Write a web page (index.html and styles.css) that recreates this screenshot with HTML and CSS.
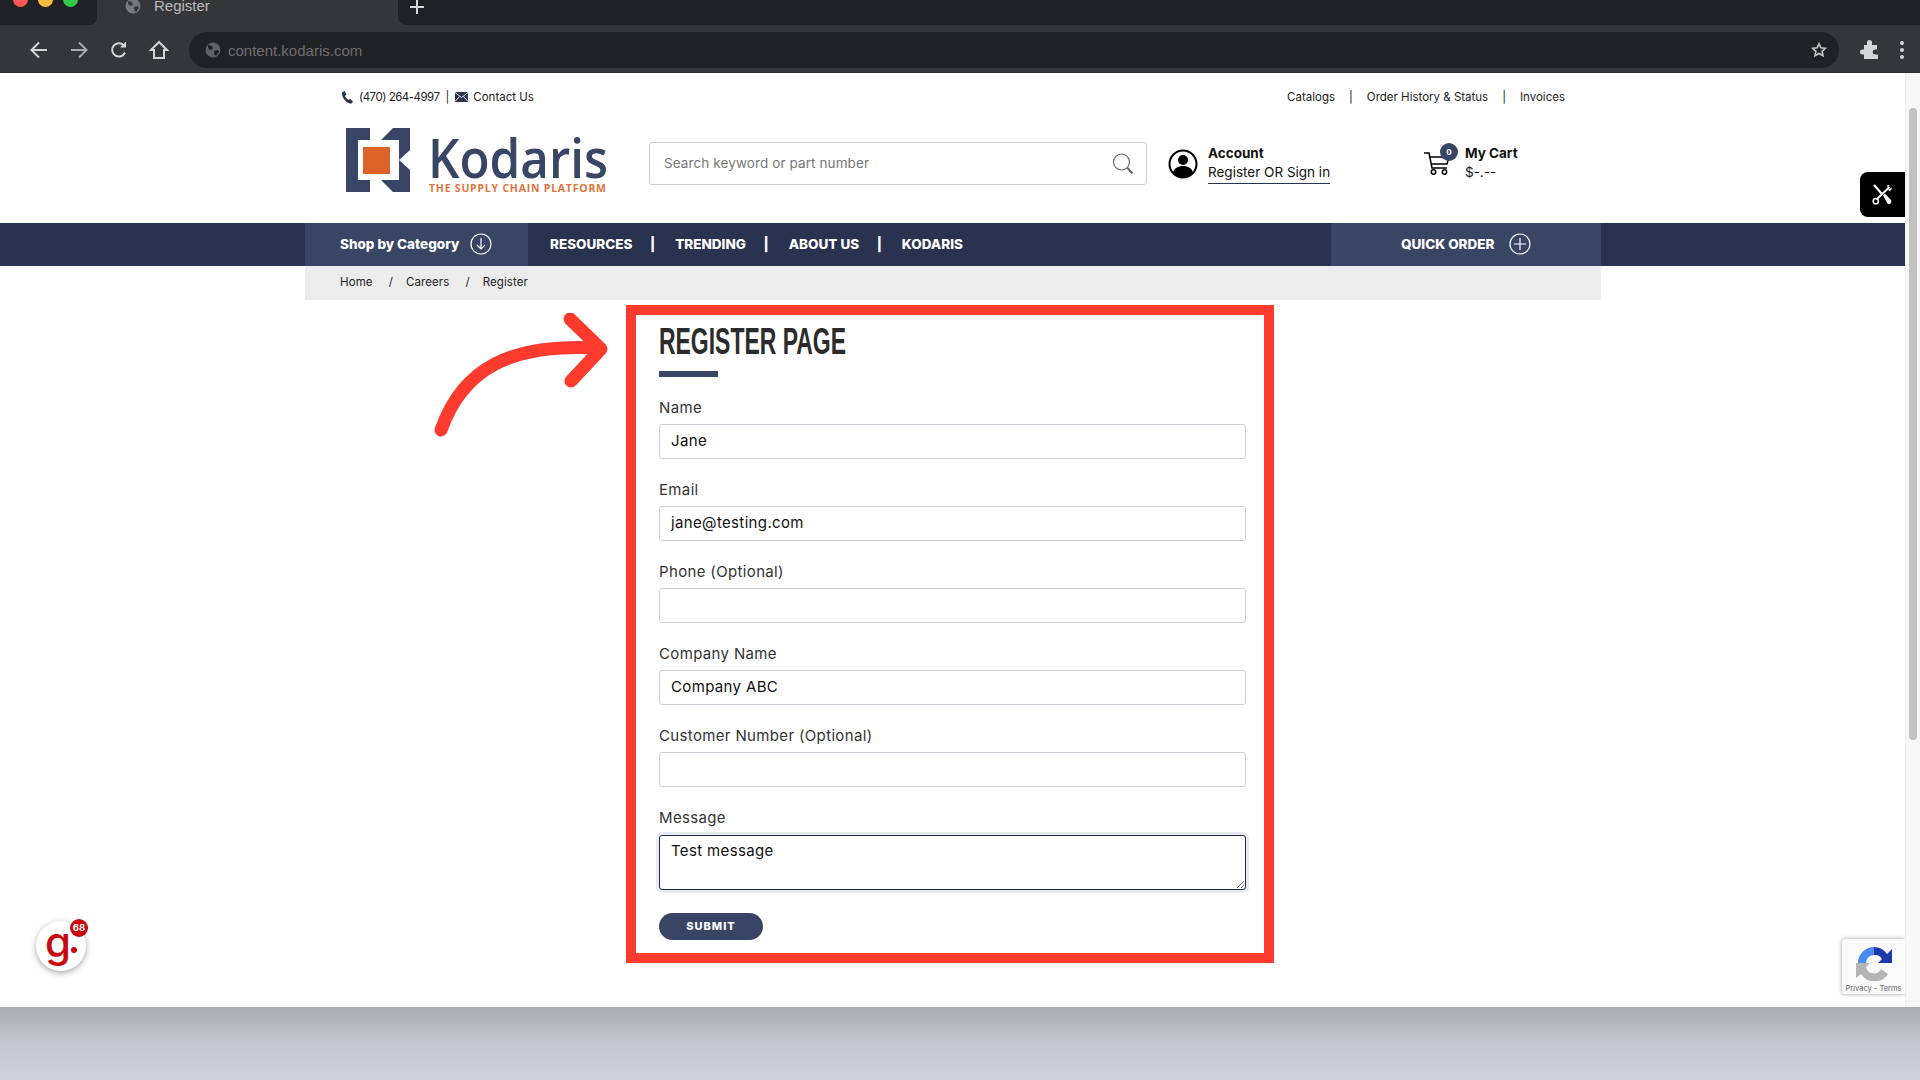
FILE: index.html
```html
<!DOCTYPE html>
<html lang="en">

<head>
  <meta charset="UTF-8" />
  <title>Register</title>
  <link rel="stylesheet" href="styles.css">
</head>

<body>
  <!-- Browser frame -->
  <div class="tabstrip">
    <div class="tabstrip-left">
      <span class="light light-red"></span>
      <span class="light light-yellow"></span>
      <span class="light light-green"></span>
    </div>
    <div class="tab">
      <svg class="globe" width="16" height="16" viewBox="0 0 16 16"><circle cx="8" cy="8" r="7.500" fill="#77797d"/><path d="M3 3l4 1 1 3-3 1-2-2zM9 9l4-1 1 2-3 4-2-2z" fill="#35363a"/></svg>
      <span class="tab-title">Register</span>
    </div>
    <div class="tabstrip-right">
      <svg width="14" height="14" viewBox="0 0 14 14"><path d="M7 0v14M0 7h14" stroke="#d5d6d8" stroke-width="2"/></svg>
    </div>
  </div>
  <div class="toolbar">
    <svg class="tool-icon" width="20" height="20" viewBox="0 0 20 20"><path d="M18 10H3M10 2.500L2.500 10l7.500 7.500" fill="none" stroke="#d5d6d8" stroke-width="2"/></svg>
    <svg class="tool-icon" width="20" height="20" viewBox="0 0 20 20"><path d="M2 10h15M10 2.500l7.500 7.500-7.500 7.500" fill="none" stroke="#a9aaad" stroke-width="2"/></svg>
    <svg class="tool-icon" width="20" height="20" viewBox="0 0 20 20"><path d="M16 12.500A6.700 6.700 0 1 1 14.500 5" fill="none" stroke="#d5d6d8" stroke-width="2"/><path d="M11 7.500h6v-6z" fill="#d5d6d8"/></svg>
    <svg class="tool-icon" width="20" height="20" viewBox="0 0 20 20"><path d="M10 2L2 10h3v8h10v-8h3z" fill="none" stroke="#d5d6d8" stroke-width="2"/></svg>
    <div class="omnibox">
      <svg width="16" height="16" viewBox="0 0 16 16"><circle cx="8" cy="8" r="7.500" fill="#5f6165"/><path d="M3 3l4 1 1 3-3 1-2-2zM9 9l4-1 1 2-3 4-2-2z" fill="#202124"/></svg>
      <span class="omnibox-url">content.kodaris.com</span>
      <svg class="star" width="16" height="16" viewBox="0 0 16 16"><path d="M8 1.800l1.900 4 4.400.5-3.200 3 .9 4.400L8 11.500l-4 2.200.9-4.400-3.200-3 4.400-.5z" fill="none" stroke="#c8c9cb" stroke-width="1.600"/></svg>
    </div>
    <svg class="puzzle" width="20" height="20" viewBox="0 0 20 20"><path d="M7 2.500a2.500 2.500 0 0 1 5 0V5h5v4.500h-1.800a2.500 2.500 0 0 0 0 5H18V19H4v-4.500H2.500a2.500 2.500 0 0 1 0-5H4V5h3z" fill="#d5d6d8"/></svg>
    <span class="menu-dots"><i></i><i></i><i></i></span>
  </div>

  <div class="viewport">
    <div class="site">
      <div class="container topbar">
        <div class="topbar-left">
          <svg class="top-icon" width="13" height="13" viewBox="0 0 13 13"><path d="M1 1.500L3.500 0l2 3.500L4 5c.5 1.500 2 3.200 3.500 4l1.500-1.200 3 2.700-1.500 2C6 13 .5 7 1 1.500z" fill="#29324f"/></svg>
          <a class="phone">(470) 264-4997</a>
          <span class="pipe">|</span>
          <svg class="top-icon" width="13" height="10" viewBox="0 0 13 10"><rect width="13" height="10" fill="#29324f"/><path d="M0 .5l6.500 5 6.500-5M0 9.500l4.500-5M13 9.500l-4.500-5" fill="none" stroke="#fff" stroke-width=".9"/></svg>
          <a>Contact Us</a>
        </div>
        <div class="topbar-right">
          <a>Catalogs</a><span class="pipe">|</span><a>Order History &amp; Status</a><span class="pipe">|</span><a>Invoices</a>
        </div>
      </div>

      <div class="container masthead">
        <svg class="logo" width="270" height="70" viewBox="0 0 270 70">
          <g fill="#384565">
            <path d="M2 3H26V15H14V55H26V67H2z"/>
            <path d="M37 15L49 3H66V25L55 35L66 45V67H49L37 55H55V15z"/>
          </g>
          <rect x="19" y="22" width="27" height="27" fill="#dd6428"/>
          <text class="logo-name" x="84" y="53" textLength="180" lengthAdjust="spacingAndGlyphs">Kodaris</text>
          <text class="logo-tag" x="85" y="67" textLength="177">THE SUPPLY CHAIN PLATFORM</text>
        </svg>

        <div class="search">
          <input class="search-input" type="text" placeholder="Search keyword or part number">
          <svg width="24" height="24" viewBox="0 0 24 24"><circle cx="10.500" cy="10" r="8" fill="none" stroke="#666" stroke-width="1.200"/><path d="M16.500 16l5 5.500" stroke="#666" stroke-width="2"/></svg>
        </div>

        <div class="account">
          <svg width="30" height="30" viewBox="0 0 30 30"><circle cx="15" cy="15" r="13.500" fill="#fff" stroke="#000" stroke-width="2"/><circle cx="15" cy="11" r="5" fill="#000"/><path d="M5 24c1-5 5-7 10-7s9 2 10 7c-3 3-6 5-10 5s-7-2-10-5z" fill="#000"/></svg>
          <div class="account-text">
            <strong>Account</strong>
            <a>Register OR Sign in</a>
          </div>
        </div>

        <div class="cart">
          <div class="cart-icon">
            <svg width="28" height="28" viewBox="0 0 28 28"><path d="M0 6h5l3 15h15M6 10h19l-2 7H7.500" fill="none" stroke="#000" stroke-width="1.500"/><circle cx="9.500" cy="25" r="2.200" fill="none" stroke="#000" stroke-width="1.500"/><circle cx="20.500" cy="25" r="2.200" fill="none" stroke="#000" stroke-width="1.500"/></svg>
            <span class="cart-badge">0</span>
          </div>
          <div class="cart-text">
            <strong>My Cart</strong>
            <span>$-.--</span>
          </div>
        </div>
      </div>

      <nav class="navbar">
        <div class="container nav-inner">
          <a class="shop-tab">Shop by Category
            <svg width="22" height="22" viewBox="0 0 22 22"><circle cx="11" cy="11" r="10" fill="none" stroke="#fff" stroke-width="1.200"/><path d="M11 5v11M7 12l4 4 4-4" fill="none" stroke="#fff" stroke-width="1.200"/></svg>
          </a>
          <a class="nav-link">RESOURCES</a><span class="nav-pipe">|</span>
          <a class="nav-link">TRENDING</a><span class="nav-pipe">|</span>
          <a class="nav-link">ABOUT US</a><span class="nav-pipe">|</span>
          <a class="nav-link">KODARIS</a>
          <a class="quick-order">QUICK ORDER
            <svg width="22" height="22" viewBox="0 0 22 22"><circle cx="11" cy="11" r="10" fill="none" stroke="#fff" stroke-width="1.200"/><path d="M11 5v12M5 11h12" fill="none" stroke="#fff" stroke-width="1.200"/></svg>
          </a>
        </div>
      </nav>

      <div class="container breadcrumb">
        <a>Home</a><span>/</span><a>Careers</a><span>/</span><a>Register</a>
      </div>

      <div class="container">
        <main class="red-box">
          <h1 class="page-title">REGISTER PAGE</h1>
          <div class="title-rule"></div>
          <form>
            <label class="field">Name<input type="text" value="Jane"></label>
            <label class="field">Email<input type="text" value="jane@testing.com"></label>
            <label class="field">Phone (Optional)<input type="text"></label>
            <label class="field">Company Name<input type="text" value="Company ABC"></label>
            <label class="field">Customer Number (Optional)<input type="text"></label>
            <label class="field field-message">Message<textarea>Test message</textarea></label>
            <button class="submit-btn" type="button">SUBMIT</button>
          </form>
        </main>
      </div>

      <!-- Annotation arrow -->
      <svg class="arrow" width="180" height="125" viewBox="0 0 180 125">
        <path d="M10 117C32 55 80 30 168 35M139 6L170 36L140 68" fill="none" stroke="#ff3b2e" stroke-width="13" stroke-linecap="round" stroke-linejoin="round"/>
      </svg>

      <div class="tools-btn">
        <svg width="21" height="21" viewBox="0 0 21 21"><path d="M2 1l7.500 8.500" stroke="#fff" stroke-width="2.200" fill="none"/><path d="M17.500 3L4.500 15.500" stroke="#fff" stroke-width="1.800" fill="none"/><path d="M15 1.500c2-1 2.500-.5 2.500 0L16 3.500l1.500 1.500 2-1.500c.5 1 0 3-2.500 3.500z" fill="#fff"/><circle cx="3.800" cy="17.200" r="2.600" fill="none" stroke="#fff" stroke-width="1.500"/><path d="M11 11.500l2-2 6 6.500c1.500 3-1.500 5-3.500 3.500z" fill="#fff"/></svg>
      </div>

      <div class="g-badge">
        <span class="g-letter">g</span><span class="g-dot"></span>
        <span class="g-count">68</span>
      </div>

      <div class="recaptcha">
        <svg width="40" height="36" viewBox="0 0 40 36">
          <path d="M4 18A16 16 0 0 1 20 2V10A8 8 0 0 0 12 18z" fill="#4a8af4"/>
          <path d="M20 2A16 16 0 0 1 33 9L38 4V18H24L28 14A8 8 0 0 0 20 10z" fill="#1c3aa9"/>
          <path d="M2 18H16L12 22A8 8 0 0 0 27 24L34 29A16 16 0 0 1 7 29L2 33z" fill="#b4b4b4"/>
        </svg>
        <span class="recaptcha-links">Privacy - Terms</span>
      </div>
    </div>
    <div class="scrollbar"><div class="scroll-thumb"></div></div>
  </div>

  <div class="desk-band"></div>
</body>

</html>
```

FILE: styles.css
```css
/* Reset and base styles */
* {
  box-sizing: border-box;
}

body {
  font-family: Inter, 'Open Sans', sans-serif;
  margin: 0;
  width: 1920px;
  height: 1080px;
  overflow: hidden;
  display: flex;
  flex-direction: column;
  background: #cdd0d9;
  color: #222;
}

/* Browser frame */
.tabstrip {
  height: 25px;
  display: flex;
  background: #35363a;
  font-family: 'Liberation Sans', sans-serif;
}

.tabstrip-left {
  width: 97px;
  background: #202124;
  border-bottom-right-radius: 8px;
  overflow: hidden;
  display: flex;
  gap: 10px;
  padding-left: 13px;
  align-items: flex-start;
}

.light {
  width: 15px;
  height: 15px;
  border-radius: 50%;
  margin-top: -8px;
}

.light-red { background: #fc5753; }
.light-yellow { background: #fdbc40; }
.light-green { background: #33c748; }

.tab {
  width: 301px;
  display: flex;
  align-items: flex-start;
  padding-left: 28px;
  gap: 13px;
  overflow: hidden;
}

.globe {
  margin-top: -2px;
}

.tab-title {
  color: #b9babc;
  font-size: 15px;
  line-height: 12px;
}

.tabstrip-right {
  flex: 1;
  background: #202124;
  border-bottom-left-radius: 8px;
  padding: 0 0 0 12px;
  height: 25px;
}

.toolbar {
  height: 48px;
  background: #35363a;
  display: flex;
  align-items: center;
  padding: 3px 0 0 29px;
  font-family: 'Liberation Sans', sans-serif;
  border-bottom: 1px solid #2b2c30;
}

.tool-icon {
  margin-right: 20px;
}

.omnibox {
  width: 1650px;
  height: 36px;
  background: #202124;
  border-radius: 18px;
  display: flex;
  align-items: center;
  padding-left: 16px;
}

.omnibox-url {
  color: #6e6f73;
  font-size: 15px;
  margin-left: 7px;
}

.star {
  margin-left: auto;
  margin-right: 12px;
}

.puzzle {
  margin-left: 21px;
}

.menu-dots {
  margin-left: 20px;
  display: flex;
  flex-direction: column;
  gap: 3px;
}

.menu-dots i {
  width: 4px;
  height: 4px;
  border-radius: 50%;
  background: #d5d6d8;
}

.viewport {
  flex: none;
  height: 934px;
  display: flex;
  background: #fff;
}

.site {
  flex: 1;
  position: relative;
  overflow: hidden;
}

.scrollbar {
  width: 15px;
  background: #f7f7f7;
  border-left: 1px solid #eee;
  padding: 35px 3px 0 3px;
}

.scroll-thumb {
  height: 632px;
  background: #c1c1c1;
  border-radius: 4px;
}

.desk-band {
  flex: 1;
  background: linear-gradient(#a8aaaf, #c4c7cf 35px, #cdd0d9 70px);
}

/* Site header */
.container {
  width: 1296px;
  margin-left: 305px;
}

.topbar {
  height: 48px;
  display: flex;
  justify-content: space-between;
  align-items: center;
  padding: 0 36px 0 36px;
  font-size: 11.500px;
  color: #222;
}

.topbar-left,
.topbar-right {
  display: flex;
  align-items: center;
}

.top-icon {
  margin-right: 5px;
}

.phone {
  letter-spacing: -0.5px;
}

.topbar-left .pipe {
  margin: 0 6px 0 6px;
}

.topbar-right .pipe {
  margin: 0 14px;
}

.masthead {
  height: 102px;
  display: flex;
  align-items: flex-start;
}

.logo {
  margin: 4px 0 0 39px;
  flex: none;
}

.logo-name {
  font-family: 'Open Sans', sans-serif;
  font-size: 55px;
  font-weight: 600;
  fill: #384565;
}

.logo-tag {
  font-family: 'Open Sans', sans-serif;
  font-size: 10.500px;
  font-weight: 700;
  fill: #e0733a;
}

.search {
  width: 498px;
  height: 43px;
  margin: 21px 0 0 35px;
  border: 1px solid #ccc;
  border-radius: 3px;
  display: flex;
  align-items: center;
  padding: 0 11px 0 14px;
}

.search-input {
  flex: 1;
  border: none;
  outline: none;
  font: 13.500px Inter, sans-serif;
  letter-spacing: 0.1px;
  padding: 0 0 2px;
}

.search-input::placeholder {
  color: #777;
  opacity: 1;
}

.account {
  margin: 22px 0 0 21px;
  width: 256px;
  display: flex;
  gap: 10px;
  align-items: center;
  font-size: 13.500px;
}

.account-text {
  display: flex;
  flex-direction: column;
  gap: 3px;
  color: #111;
  padding-top: 2px;
}

.account-text a {
  padding-bottom: 3px;
  border-bottom: 1px solid #29324f;
}

.cart {
  margin-top: 24px;
  display: flex;
  gap: 13px;
  font-size: 13.500px;
  color: #111;
}

.cart-icon {
  position: relative;
  width: 28px;
  height: 28px;
  margin-top: 2px;
}

.cart-badge {
  position: absolute;
  top: -4px;
  right: -6px;
  width: 18px;
  height: 18px;
  border-radius: 50%;
  background: #384565;
  color: #fff;
  font-size: 8px;
  font-weight: 700;
  text-align: center;
  line-height: 18px;
}

.cart-text {
  display: flex;
  flex-direction: column;
  gap: 3px;
}

/* Main navigation */
.navbar {
  height: 43px;
  background: #29324f;
  color: #fff;
}

.nav-inner {
  height: 43px;
  display: flex;
  align-items: center;
  font-size: 13.500px;
  font-weight: 800;
  padding-bottom: 1px;
}

.shop-tab {
  width: 223px;
  height: 43px;
  background: #384565;
  display: flex;
  align-items: center;
  gap: 11px;
  padding-left: 35px;
  margin-right: 22px;
}

.nav-pipe {
  margin: 0 20px 0 17.500px;
}

.quick-order {
  margin-left: auto;
  width: 270px;
  height: 43px;
  background: #384565;
  display: flex;
  align-items: center;
  gap: 14px;
  padding-left: 70px;
}

.breadcrumb {
  height: 34px;
  background: #ececec;
  display: flex;
  align-items: center;
  gap: 13px;
  padding: 0 0 3px 35px;
  font-size: 11.500px;
  letter-spacing: 0.1px;
  color: #222;
}

.breadcrumb span {
  margin-left: 3px;
}

/* Register form */
.red-box {
  width: 648px;
  height: 658px;
  margin: 5px 0 0 321px;
  border: 10px solid #ff3b2e;
  padding: 7px 18px 0 23px;
}

.page-title {
  margin: 0 0 9px;
  font-family: 'Liberation Sans', sans-serif;
  font-size: 37px;
  line-height: 40px;
  font-weight: 700;
  color: #2b2b2b;
  white-space: nowrap;
  transform: scaleX(0.62);
  transform-origin: left center;
}

.title-rule {
  width: 59px;
  height: 6px;
  background: #394566;
  margin-bottom: 21px;
}

.field {
  display: block;
  font-size: 15px;
  letter-spacing: 0.35px;
  line-height: 20px;
  color: #333;
  margin-bottom: 21px;
}

.field input,
.field textarea {
  display: block;
  width: 587px;
  height: 35px;
  margin-top: 6px;
  padding: 0 11px 2px;
  border: 1px solid #ccd0d6;
  border-radius: 3px;
  font: 400 15px Inter, sans-serif;
  letter-spacing: 0.35px;
  color: #111;
  outline: none;
}

.field textarea {
  height: 55px;
  margin-top: 7px;
  padding-top: 5px;
  border-color: #1f2a4a;
  box-shadow: 0 0 0 3px #e8eaf1;
}

.field-message {
  margin-bottom: 23px;
}

.submit-btn {
  display: block;
  width: 104px;
  height: 27px;
  border: none;
  border-radius: 14px;
  background: #384565;
  color: #fff;
  font: 800 11px Inter, sans-serif;
  letter-spacing: 1px;
  padding: 0 0 2px;
}

/* Things floating over the page */
.arrow {
  position: absolute;
  left: 431px;
  top: 240px;
}

.tools-btn {
  position: absolute;
  right: 0;
  top: 99px;
  width: 45px;
  height: 45px;
  background: #000;
  border-radius: 8px 0 0 8px;
  display: flex;
  align-items: center;
  justify-content: center;
}

.g-badge {
  position: absolute;
  left: 36px;
  top: 848px;
  width: 50px;
  height: 50px;
  border-radius: 50%;
  background: #fff;
  box-shadow: 0 2px 6px rgba(0, 0, 0, 0.35);
}

.g-letter {
  position: absolute;
  left: 9px;
  top: 1px;
  font-family: Inter, sans-serif;
  font-size: 42px;
  font-weight: 500;
  line-height: 40px;
  color: #c9090f;
}

.g-dot {
  position: absolute;
  left: 35px;
  top: 26px;
  width: 6px;
  height: 6px;
  border-radius: 50%;
  background: #c9090f;
}

.g-count {
  position: absolute;
  right: -2px;
  top: -2px;
  width: 18px;
  height: 18px;
  border-radius: 50%;
  background: #c9090f;
  color: #fff;
  font-size: 9.500px;
  font-weight: 700;
  line-height: 18px;
  text-align: center;
}

.recaptcha {
  position: absolute;
  right: 0;
  top: 866px;
  width: 63px;
  height: 55px;
  background: #f9f9f9;
  border-radius: 3px 0 0 3px;
  box-shadow: 0 0 4px rgba(0, 0, 0, 0.4);
  display: flex;
  flex-direction: column;
  align-items: center;
  padding-top: 6px;
}

.recaptcha-links {
  font-size: 7.500px;
  color: #666;
  white-space: nowrap;
  margin-top: 3px;
}
```
